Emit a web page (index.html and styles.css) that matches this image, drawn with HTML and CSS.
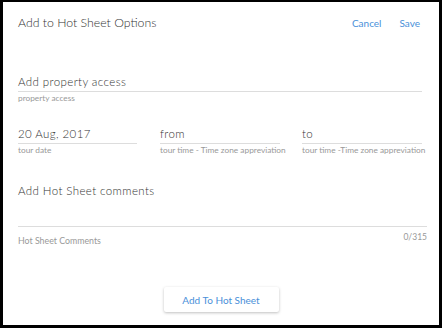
FILE: index.html
```html
<!DOCTYPE html>
<html>
<head>
<meta charset="utf-8">
<link rel="stylesheet" href="styles.css">
</head>
<body>
<div class="frame">
  <div class="header">
    <div class="title">Add to Hot Sheet Options</div>
    <div class="actions">
      <span class="link">Cancel</span>
      <span class="link">Save</span>
    </div>
  </div>
  <div class="field field-access">
    <div class="value">Add property access</div>
    <div class="label">property access</div>
  </div>
  <div class="row">
    <div class="field col-date">
      <div class="value">20 Aug, 2017</div>
      <div class="label">tour date</div>
    </div>
    <div class="field col-from">
      <div class="value">from</div>
      <div class="label">tour time - Time zone appreviation</div>
    </div>
    <div class="field col-to">
      <div class="value">to</div>
      <div class="label">tour time -Time zone appreviation</div>
    </div>
  </div>
  <div class="field field-comments">
    <div class="value comment-value">Add Hot Sheet comments</div>
    <div class="comment-foot">
      <span class="label">Hot Sheet Comments</span>
      <span class="counter">0/315</span>
    </div>
  </div>
  <div class="footer">
    <button class="add-btn">Add To Hot Sheet</button>
  </div>
</div>
</body>
</html>
```
FILE: styles.css
```css
html, body {
  margin: 0;
  padding: 0;
  background: #fff;
}
.frame {
  width: 442px;
  height: 328px;
  box-sizing: border-box;
  border-style: solid;
  border-color: #000;
  border-width: 2px 3px 3px 3px;
  padding: 0 17px 0 15px;
  font-family: Lato, "Open Sans", sans-serif;
  font-weight: 300;
  color: #333;
  display: flex;
  flex-direction: column;
}
.header {
  display: flex;
  justify-content: space-between;
  align-items: baseline;
  height: 42px;
  padding-top: 13px;
  box-sizing: border-box;
}
.title {
  font-size: 12.3px;
  color: #333;
}
.actions {
  display: flex;
  gap: 18px;
  padding-right: 2px;
}
.link {
  font-size: 10px;
  font-weight: 400;
  color: #4a90d9;
}
.field .value {
  font-size: 11.5px;
  letter-spacing: 0.4px;
  color: #333;
  border-bottom: 1px solid #ddd;
  padding-bottom: 2px;
  line-height: 15px;
  white-space: nowrap;
}
.field .label {
  font-size: 8.3px;
  font-weight: 400;
  color: #999;
  margin-top: 1px;
  line-height: 11px;
  white-space: nowrap;
}
.field-access {
  margin-top: 30px;
}
.row {
  display: flex;
  margin-top: 22px;
}
.col-date {
  width: 119px;
}
.col-from {
  width: 120px;
  margin-left: 23px;
}
.col-to {
  width: 120px;
  margin-left: 22px;
}
.field-comments {
  margin-top: 27px;
  margin-right: -5px;
}
.field-comments .comment-value {
  height: 43px;
  padding-bottom: 0;
}
.comment-foot {
  display: flex;
  justify-content: space-between;
  align-items: flex-start;
}
.comment-foot .label {
  font-size: 8.8px;
  margin-top: 8px;
}
.counter {
  font-size: 8.5px;
  font-weight: 400;
  color: #999;
  margin-top: 5px;
  line-height: 11px;
}
.footer {
  display: flex;
  justify-content: center;
  margin-top: 41px;
}
.add-btn {
  width: 115px;
  height: 25px;
  border: none;
  background: #fff;
  border-radius: 2px;
  box-shadow: 0 1px 3px rgba(0,0,0,0.25);
  font-family: Lato, "Open Sans", sans-serif;
  font-weight: 400;
  font-size: 10px;
  color: #4a90d9;
  margin-left: 2px;
  padding: 0;
}
```
